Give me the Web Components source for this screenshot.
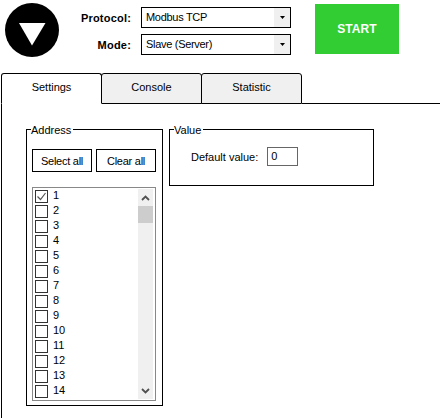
<!DOCTYPE html>
<html><head><meta charset="utf-8"><title>Modbus</title>
<style>
html,body{margin:0;padding:0;background:#fff}
body{width:440px;height:418px;overflow:hidden;font:11px "Liberation Sans",Arial,sans-serif;color:#000}
</style></head><body>
<app-root></app-root>
<script>
function def(name, html){
  customElements.define(name, class extends HTMLElement{
    constructor(){super();this.attachShadow({mode:'open'}).innerHTML=html;}
  });
}
def('status-icon',`<style>:host{display:block;width:54px;height:54px;flex:none}svg{display:block}</style>
<svg width="54" height="54" viewBox="0 0 54 54"><circle cx="27" cy="27" r="27" fill="#000"/><path d="M14 20H40.500L27 42.500Z" fill="#fff"/></svg>`);
def('combo-box',`<style>:host{display:flex;width:150px;height:21px;box-sizing:border-box;border:1px solid #000;background:#fff;align-items:stretch}
.t{flex:1;padding:0 0 0 4px;line-height:19px;white-space:nowrap;letter-spacing:-.3px}
.b{width:16px;background:#f0f0f0;display:flex;align-items:center;justify-content:center}
svg{display:block}</style><div class="t"><slot></slot></div><div class="b"><svg width="5" height="3" viewBox="0 0 5 3"><path d="M0 0H5L2.500 3Z" fill="#000"/></svg></div>`);
def('form-row',`<style>:host{display:flex;align-items:center;height:21px}
.l{width:82px;box-sizing:border-box;text-align:right;padding-right:10px;font-weight:bold;letter-spacing:.2px;white-space:nowrap}</style>
<div class="l"><slot name="label"></slot></div><slot></slot>`);
def('start-button',`<style>:host{display:flex;width:84px;height:50px;background:#32cd32;color:#fff;font-weight:bold;font-size:12px;align-items:center;justify-content:center;letter-spacing:.1px;flex:none}</style><slot></slot>`);
def('top-bar',`<style>:host{display:flex;height:73px;box-sizing:border-box;padding:3px 0 0 5px}
.f{display:flex;flex-direction:column;gap:6px;padding-top:4px;margin-left:0;width:232px;flex:none}
.s{margin:1px 0 0 24px}</style>
<status-icon></status-icon>
<div class="f">
<form-row><span slot="label">Protocol:</span><combo-box>Modbus TCP</combo-box></form-row>
<form-row><span slot="label">Mode:</span><combo-box>Slave (Server)</combo-box></form-row>
</div>
<div class="s"><start-button>START</start-button></div>`);
def('tab-item',`<style>:host{display:flex;width:101px;height:31px;box-sizing:border-box;border:1px solid #000;border-radius:3px 3px 0 0;background:#f0f0f0;align-items:flex-start;justify-content:center;padding-top:7px;line-height:13px;margin-right:-1px;position:relative}
:host([active]){background:#fff;border-bottom-color:#fff;z-index:1}</style><slot></slot>`);
def('tab-strip',`<style>:host{display:flex;height:31px;box-sizing:border-box;padding-left:1px}
.r{flex:1;height:31px;box-sizing:border-box;border-bottom:1px solid #000;margin-left:1px}</style><slot></slot><div class="r"></div>`);
def('group-box',`<style>:host{display:block;box-sizing:border-box;border:1px solid #000;position:relative}
.c{position:absolute;left:4px;top:-6px;background:#fff;padding-right:2px;line-height:13px}</style><span class="c"><slot name="caption"></slot></span><slot></slot>`);
def('flat-button',`<style>:host{display:flex;width:60px;height:23px;box-sizing:border-box;border:1px solid #000;align-items:center;justify-content:center;white-space:nowrap;letter-spacing:-.25px}</style><slot></slot>`);
def('check-item',`<style>:host{display:flex;height:15px;align-items:center;gap:5px;line-height:13px}
.b{width:13px;height:13px;box-sizing:border-box;border:1px solid #333;background:#fff;flex:none}svg{display:block}
.n{padding-bottom:2px}</style>
<div class="b"><svg id="k" width="11" height="11" viewBox="0 0 11 11"></svg></div><div class="n"><slot></slot></div>`);
customElements.define('check-list', class extends HTMLElement{
  constructor(){super();
    let items='';
    for(let i=1;i<=14;i++) items+=`<check-item ${i==1?'class="on"':''}>${i}</check-item>`;
    this.attachShadow({mode:'open'}).innerHTML=`<style>:host{display:flex;width:124px;height:214px;box-sizing:border-box;border:1px solid #888;padding:1px 2px 1px 2px;overflow:hidden}
.i{flex:1;overflow:hidden}
.sb{width:15px;background:#f0f0f0;display:flex;flex-direction:column;flex:none}
.a{height:17px;display:flex;align-items:center;justify-content:center;flex:none}
.th{height:17px;background:#cdcdcd;flex:none}
.g{flex:1}svg{display:block}</style>
<div class="i">${items}</div>
<div class="sb"><div class="a"><svg width="9" height="6" viewBox="0 0 9 6"><path d="M1 5L4.500 1.500L8 5" fill="none" stroke="#505050" stroke-width="1.800"/></svg></div><div class="th"></div><div class="g"></div><div class="a"><svg width="9" height="6" viewBox="0 0 9 6"><path d="M1 1L4.500 4.500L8 1" fill="none" stroke="#505050" stroke-width="1.800"/></svg></div></div>`;
    const first=this.shadowRoot.querySelector('check-item.on');
    first.shadowRoot.getElementById('k').innerHTML='<path d="M1.500 5.500L4.500 8.500L9.500 2" fill="none" stroke="#555" stroke-width="1.200"/>';
  }
});
def('address-group',`<style>:host{display:block}
group-box{width:137px;height:277px;padding:19px 6px 0 5px;display:block}
.b{display:flex;gap:4px;margin-bottom:15px}</style>
<group-box><span slot="caption">Address</span>
<div class="b"><flat-button>Select all</flat-button><flat-button>Clear all</flat-button></div>
<check-list></check-list></group-box>`);
def('value-group',`<style>:host{display:block}
group-box{width:205px;height:57px;display:block;padding:17px 0 0 21px}
.r{display:flex;align-items:center;gap:9px}
.i{width:31px;height:19px;box-sizing:border-box;border:1px solid #666;padding-left:3px;line-height:17px}</style>
<group-box><span slot="caption">Value</span>
<div class="r"><span>Default value:</span><div class="i">0</div></div></group-box>`);
def('settings-page',`<style>:host{display:flex;height:315px;box-sizing:border-box;border-left:1px solid #000;margin-left:1px;padding:25px 0 0 24px;gap:6px;align-items:flex-start}</style>
<address-group></address-group><value-group></value-group>`);
def('app-root',`<style>:host{display:block;height:418px;overflow:hidden}</style>
<top-bar></top-bar>
<tab-strip><tab-item active>Settings</tab-item><tab-item>Console</tab-item><tab-item>Statistic</tab-item></tab-strip>
<settings-page></settings-page>`);
</script></body></html>
